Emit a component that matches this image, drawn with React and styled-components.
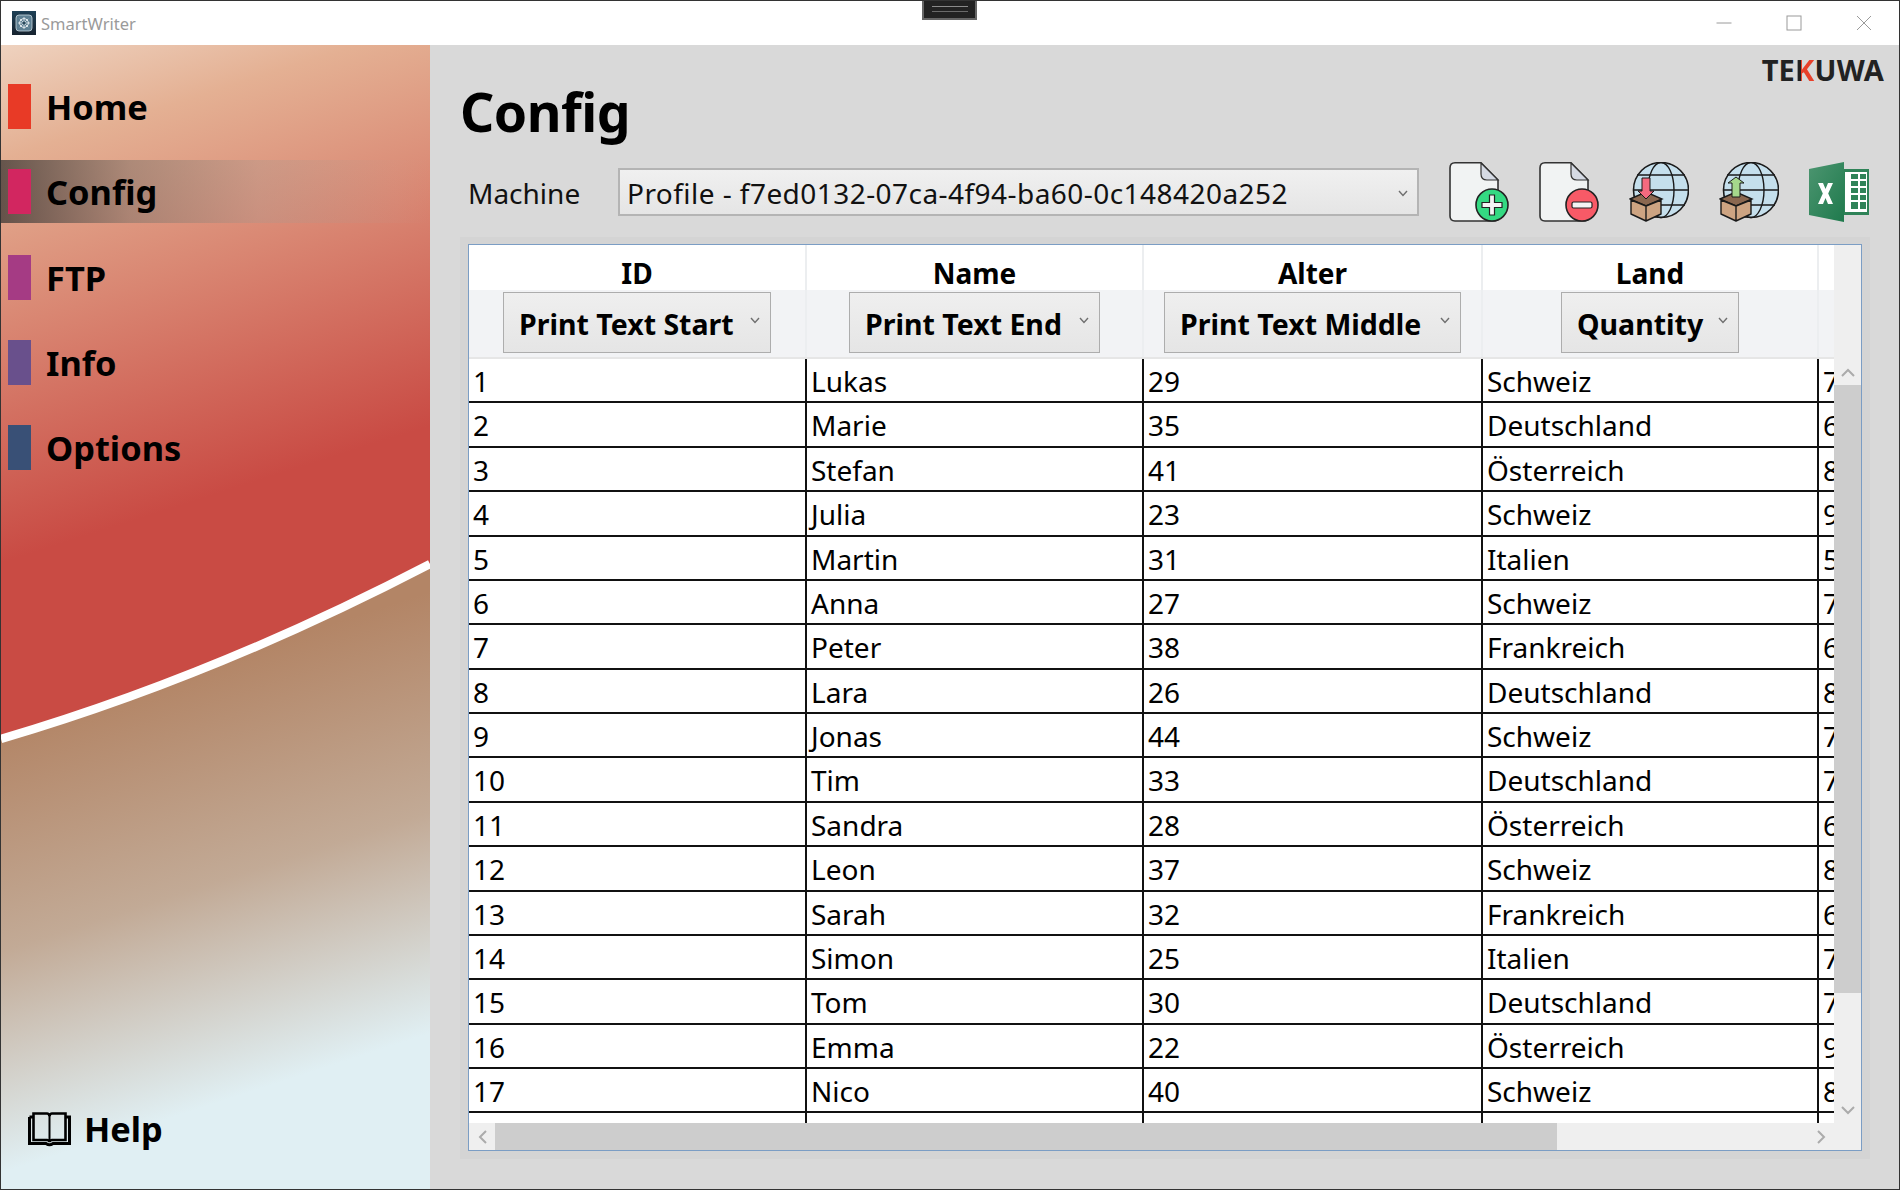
import React from 'react';
import styled, { createGlobalStyle } from 'styled-components';

const FONT = `"Noto Sans", "Open Sans", sans-serif`;

const navItems = [
  { label: 'Home', color: '#e83a26' },
  { label: 'Config', color: '#d22660', active: true },
  { label: 'FTP', color: '#a53b84' },
  { label: 'Info', color: '#69508c' },
  { label: 'Options', color: '#395076' },
];

const columns = [
  { title: 'ID', filter: 'Print Text Start', width: 268 },
  { title: 'Name', filter: 'Print Text End', width: 251 },
  { title: 'Alter', filter: 'Print Text Middle', width: 297 },
  { title: 'Land', filter: 'Quantity', width: 178 },
];

const people = [
  ['1', 'Lukas', '29', 'Schweiz', '7'],
  ['2', 'Marie', '35', 'Deutschland', '6'],
  ['3', 'Stefan', '41', 'Österreich', '8'],
  ['4', 'Julia', '23', 'Schweiz', '9'],
  ['5', 'Martin', '31', 'Italien', '5'],
  ['6', 'Anna', '27', 'Schweiz', '7'],
  ['7', 'Peter', '38', 'Frankreich', '6'],
  ['8', 'Lara', '26', 'Deutschland', '8'],
  ['9', 'Jonas', '44', 'Schweiz', '7'],
  ['10', 'Tim', '33', 'Deutschland', '7'],
  ['11', 'Sandra', '28', 'Österreich', '6'],
  ['12', 'Leon', '37', 'Schweiz', '8'],
  ['13', 'Sarah', '32', 'Frankreich', '6'],
  ['14', 'Simon', '25', 'Italien', '7'],
  ['15', 'Tom', '30', 'Deutschland', '7'],
  ['16', 'Emma', '22', 'Österreich', '9'],
  ['17', 'Nico', '40', 'Schweiz', '8'],
  ['', '', '', '', ''],
];

const GlobalStyle = createGlobalStyle`
  html, body { margin: 0; padding: 0; }
  body { font-family: ${FONT}; background: #d9d9d9; }
  * { box-sizing: border-box; }
`;

const Window = styled.div`
  width: 1900px;
  height: 1190px;
  display: flex;
  flex-direction: column;
  border: 1px solid #333;
  overflow: hidden;
  position: relative;
`;

const TitleBar = styled.div`
  height: 44px;
  flex: none;
  background: #fff;
  display: flex;
  align-items: center;
  padding: 0 27px 0 11px;
  gap: 5px;
`;

const AppName = styled.span`
  font-size: 16.5px;
  color: #9a9a9a;
  flex: 1;
`;

const WindowButtons = styled.div`
  display: flex;
  align-items: center;
  gap: 54px;
`;

const Handle = styled.div`
  position: absolute;
  left: 921px;
  top: -1px;
  width: 55px;
  height: 20px;
  background: #222;
  border: 2px solid #666;
  border-top: 0;
  display: flex;
  align-items: center;
  justify-content: center;

  &::after {
    content: '';
    width: 36px;
    height: 4px;
    border-top: 1px solid #8a8a8a;
    border-bottom: 1px solid #6a6a6a;
  }
`;

const Body = styled.div`
  flex: 1;
  min-height: 0;
  display: flex;
`;

const Sidebar = styled.aside`
  width: 429px;
  flex: none;
  position: relative;
  display: flex;
  flex-direction: column;
  padding-top: 28px;
`;

const SidebarArt = styled.svg`
  position: absolute;
  inset: 0;
  width: 100%;
  height: 100%;
`;

const NavItem = styled.div`
  position: relative;
  height: 85.33px;
  display: flex;
  align-items: center;
  flex: none;
  padding-bottom: 18px;
  gap: 15px;
  padding-left: 7px;
  font-size: 34.4px;
  font-weight: 700;
  color: #000;

  ${(p) => p.$active && `
    &::before {
      content: '';
      position: absolute;
      left: 0;
      right: 0;
      top: 2px;
      height: 63px;
      background: linear-gradient(90deg, rgba(70, 62, 58, 0.8) 0%, rgba(130, 115, 105, 0.55) 30%, rgba(170, 150, 140, 0.35) 60%, rgba(190, 160, 150, 0.08) 92%, rgba(190, 160, 150, 0) 100%);
    }
  `}
`;

const Marker = styled.span`
  position: relative;
  width: 23px;
  height: 45px;
  background: ${(p) => p.$color};
`;

const NavLabel = styled.span`
  position: relative;
  line-height: 45px;
`;

const HelpRow = styled.div`
  position: relative;
  margin-top: auto;
  margin-bottom: 37px;
  padding-left: 27px;
  display: flex;
  align-items: center;
  gap: 13px;
  font-size: 34.4px;
  font-weight: 700;
  line-height: 46px;
  color: #000;
`;

const Main = styled.main`
  flex: 1;
  min-width: 0;
  background: #d9d9d9;
  padding: 0 30px 30px 30px;
  position: relative;
  display: flex;
  flex-direction: column;
`;

const Logo = styled.div`
  position: absolute;
  top: 6px;
  right: 15px;
  font-size: 29px;
  line-height: 38px;
  font-weight: 700;
  letter-spacing: 0.2px;
  color: #222;
`;

const LogoK = styled.span`
  background: linear-gradient(90deg, #222 30%, #e8402a 30%);
  -webkit-background-clip: text;
  background-clip: text;
  color: transparent;
`;

const Title = styled.h1`
  margin: 0;
  height: 117px;
  padding-top: 29px;
  font-size: 53.5px;
  line-height: 76px;
  font-weight: 700;
  color: #000;
  letter-spacing: -0.5px;
`;

const Toolbar = styled.div`
  display: flex;
  align-items: center;
  height: 60px;
  flex: none;
`;

const MachineLabel = styled.label`
  width: 158px;
  padding: 2px 0 0 8px;
  font-size: 28px;
  color: #111;
`;

const Combo = styled.div`
  width: 801px;
  height: 48px;
  margin-right: 30px;
  display: flex;
  align-items: center;
  justify-content: space-between;
  padding: 2px 9px 0 7px;
  font-size: 28px;
  letter-spacing: 0.45px;
  color: #111;
  border: 2px solid #b4b4b4;
  background: linear-gradient(#f0f0f0, #e5e5e5);
  white-space: nowrap;
`;

const IconRow = styled.div`
  display: flex;
  gap: 30px;
`;

const Panel = styled.div`
  margin-top: 15px;
  height: 922px;
  margin-right: -1px;
  padding: 7px 8px 8px 8px;
  background: #d4d4d4;
  flex: none;
`;

const Grid = styled.div`
  height: 100%;
  border: 1px solid #7b9dc4;
  background: #fff;
  display: grid;
  grid-template-columns: 1fr 27px;
  grid-template-rows: 1fr 27px;
  overflow: hidden;
`;

const GridContent = styled.div`
  overflow: hidden;
  min-width: 0;
  min-height: 0;
`;

const HeaderRow = styled.div`
  display: flex;
  height: 114px;
  background: linear-gradient(#fff 0, #fff 45px, #f2f3f5 45px, #f2f3f5 100%);
  border-bottom: 2px solid #e6e6e6;
`;

const HeaderCell = styled.div`
  flex: none;
  width: ${(p) => p.$width}px;
  display: flex;
  flex-direction: column;
  align-items: center;
  border-right: 2px solid #eceef0;
`;

const HeaderTitle = styled.div`
  height: 46px;
  font-size: 28px;
  font-weight: 700;
  line-height: 56px;
  color: #000;
`;

const FilterSelect = styled.div`
  width: ${(p) => p.$width}px;
  height: 61px;
  margin-top: 1px;
  display: flex;
  align-items: center;
  justify-content: space-between;
  padding: 2px 10px 0 15px;
  font-size: 28.5px;
  font-weight: 700;
  white-space: nowrap;
  color: #000;
  border: 1px solid #adadad;
  background: linear-gradient(#efefef, #e5e5e5);
`;

const Row = styled.div`
  display: flex;
  height: 44.375px;
  border-bottom: 2px solid #111;
`;

const Cell = styled.div`
  flex: none;
  width: ${(p) => p.$width}px;
  height: 44.375px;
  padding-left: 4px;
  font-size: 28px;
  line-height: 45px;
  color: #000;
  border-right: 2px solid #111;
  overflow: hidden;
  white-space: nowrap;
`;

const VScroll = styled.div`
  background: #efefef;
  position: relative;
`;

const HScroll = styled.div`
  background: #efefef;
  position: relative;
  display: flex;
  align-items: center;
`;

const ScrollCorner = styled.div`
  background: #efefef;
`;

const ThumbV = styled.div`
  position: absolute;
  left: 0;
  right: 0;
  top: 140px;
  height: 608px;
  background: #cdcdcd;
`;

const ThumbH = styled.div`
  height: 100%;
  width: 1062px;
  margin-left: 26px;
  background: #cdcdcd;
`;

const ArrowV = styled.svg`
  position: absolute;
  left: 7px;
  ${(p) => (p.$bottom ? 'bottom: 8px;' : 'top: 123px;')}
`;

const ArrowH = styled.svg`
  position: absolute;
  ${(p) => (p.$right ? 'right: 8px;' : 'left: 9px;')}
`;

const ChevronIcon = styled.svg`
  flex: none;
  margin-bottom: ${(p) => p.$lift}px;
`;

const FileIcon = ({ color, plus }) => (
  <svg width="60" height="60" viewBox="0 0 60 60">
    <path d="M6 0.8 H32 L49 18 V55 Q49 59 45 59 H6 Q1 59 1 54 V6 Q1 0.8 6 0.8 Z" fill="#f1f3f3" stroke="#333" strokeWidth="1.6" />
    <path d="M32 1 L49 18 H38 Q32 18 32 12 Z" fill="#d5dae4" stroke="#333" strokeWidth="1.2" />
    <circle cx="43" cy="43" r="16" fill={color} stroke="#222" strokeWidth="1.6" />
    {plus ? (
      <path d="M40.5 33 H45.5 V40.5 H53 V45.5 H45.5 V53 H40.5 V45.5 H33 V40.5 H40.5 Z" fill="#f4f4f4" stroke="#222" strokeWidth="1.2" />
    ) : (
      <rect x="33" y="40" width="20" height="6" rx="1.5" fill="#f4f4f4" stroke="#222" strokeWidth="1.2" />
    )}
  </svg>
);

const GlobeIcon = ({ up }) => (
  <svg width="60" height="60" viewBox="0 0 60 60">
    <circle cx="32" cy="28" r="27.5" fill="#c5dfec" stroke="#1a1a1a" strokeWidth="1.6" />
    <ellipse cx="32" cy="28" rx="13" ry="27.5" fill="none" stroke="#1a1a1a" strokeWidth="1.4" />
    <path d="M8 13 H56 M5 28 H59 M8 43 H56" stroke="#1a1a1a" strokeWidth="1.4" fill="none" />
    <path d="M1 37 L17 30 L33 37 L17 44 Z" fill="#8b6850" stroke="#1a1a1a" strokeWidth="1.4" />
    {up ? (
      <path d="M13 35 V21 H9 L17 15 L25 21 H21 V35 Z" fill="#a5d88c" stroke="#1a1a1a" strokeWidth="1" />
    ) : (
      <path d="M13 16 H21 V29 H25 L17 37 L9 29 H13 Z" fill="#f56a7f" stroke="#1a1a1a" strokeWidth="1" />
    )}
    <path d="M2 38 V52 L17 59 V44 Z M32 38 V52 L17 59 V44 Z" fill="#cda482" stroke="#1a1a1a" strokeWidth="1.4" strokeLinejoin="round" />
  </svg>
);

const ExcelIcon = () => (
  <svg width="60" height="60" viewBox="0 0 60 60">
    <defs>
      <linearGradient id="excelFill" x1="0" y1="0" x2="1" y2="1">
        <stop offset="0" stopColor="#4c9570" />
        <stop offset="1" stopColor="#1f7a4d" />
      </linearGradient>
    </defs>
    <rect x="35" y="7" width="25" height="46" fill="#2f8358" />
    <path d="M36 10 H58 V50 H36 Z" fill="#fff" />
    <path d="M42 12 H49 V17 H42 Z M51 12 H57 V17 H51 Z M42 19 H49 V24 H42 Z M51 19 H57 V24 H51 Z M42 26 H49 V31 H42 Z M51 26 H57 V31 H51 Z M42 33 H49 V38 H42 Z M51 33 H57 V38 H51 Z M42 40 H49 V47 H42 Z M51 40 H57 V47 H51 Z" fill="#2f8358" />
    <path d="M0 7 L35 0 V60 L0 53 Z" fill="url(#excelFill)" />
    <path d="M9 21 H14 L16.5 27 L19 21 H24 L19.2 31.5 L24 42 H19 L16.5 36 L14 42 H9 L13.8 31.5 Z" fill="#fff" />
  </svg>
);

const AppIcon = () => (
  <svg width="24" height="24" viewBox="0 0 24 24">
    <defs>
      <linearGradient id="appFill" x1="0" y1="0" x2="0" y2="1">
        <stop offset="0" stopColor="#1d3f55" />
        <stop offset="1" stopColor="#17232f" />
      </linearGradient>
    </defs>
    <rect width="24" height="24" fill="url(#appFill)" />
    <rect x="4" y="4" width="16" height="16" rx="3" fill="#5d7f92" stroke="#c9d8df" strokeWidth="0.8" />
    <circle cx="12" cy="12" r="4.4" fill="none" stroke="#e8eef1" strokeWidth="1" />
    <path d="M12 6 V18 M6 12 H18 M7.8 7.8 L16.2 16.2 M16.2 7.8 L7.8 16.2" stroke="#e8eef1" strokeWidth="0.8" />
    <circle cx="12" cy="12" r="1.6" fill="#29485a" />
  </svg>
);

const BookIcon = () => (
  <svg width="43" height="36" viewBox="0 0 43 36">
    <path d="M1.5 6 H5 M38 6 H41.5 V32.5 H25 Q21.5 35 18 32.5 H1.5 V6" fill="none" stroke="#000" strokeWidth="3" />
    <path d="M5.5 2.5 H19 Q21 2.5 21.5 5 Q22 2.5 24 2.5 H37.5 V29 H24 Q22 29 21.5 31 Q21 29 19 29 H5.5 Z" fill="none" stroke="#000" strokeWidth="2.6" />
    <path d="M21.5 5 V31" stroke="#000" strokeWidth="2" />
  </svg>
);

const Chevron = ({ lift = 0 }) => (
  <ChevronIcon $lift={lift} width="10" height="7" viewBox="0 0 10 7">
    <path d="M1 1 L5 5.5 L9 1" fill="none" stroke="#6e6e6e" strokeWidth="1.4" />
  </ChevronIcon>
);

const App = () => {
  const colWidths = [338, 337, 339, 336, 60];
  return (
    <>
      <GlobalStyle />
      <Window>
        <Handle />
        <TitleBar>
          <AppIcon />
          <AppName>SmartWriter</AppName>
          <WindowButtons>
            <svg width="16" height="16" viewBox="0 0 16 16">
              <path d="M0.5 8 H15.5" stroke="#9a9a9a" />
            </svg>
            <svg width="16" height="16" viewBox="0 0 16 16">
              <rect x="1" y="1" width="14" height="14" fill="none" stroke="#9a9a9a" />
            </svg>
            <svg width="16" height="16" viewBox="0 0 16 16">
              <path d="M1 1 L15 15 M15 1 L1 15" stroke="#9a9a9a" />
            </svg>
          </WindowButtons>
        </TitleBar>
        <Body>
          <Sidebar>
            <SidebarArt viewBox="0 0 429 1144" preserveAspectRatio="none">
              <defs>
                <linearGradient id="topFill" gradientUnits="userSpaceOnUse" x1="0" y1="0" x2="150" y2="470">
                  <stop offset="0" stopColor="#eed2bf" />
                  <stop offset="0.22" stopColor="#e4b093" />
                  <stop offset="0.55" stopColor="#d98672" />
                  <stop offset="1" stopColor="#c94b44" />
                </linearGradient>
                <linearGradient id="lowFill" gradientUnits="userSpaceOnUse" x1="110" y1="650" x2="240" y2="1050">
                  <stop offset="0" stopColor="#b38566" />
                  <stop offset="0.5" stopColor="#c2aa96" />
                  <stop offset="1" stopColor="#e0eff3" />
                </linearGradient>
              </defs>
              <rect width="429" height="1144" fill="url(#lowFill)" />
              <path d="M0 694 Q214 631 429 519 V0 H0 Z" fill="url(#topFill)" />
              <path d="M0 694 Q214 631 429 519" fill="none" stroke="#fff" strokeWidth="8.5" />
            </SidebarArt>
            {navItems.map((item) => (
              <NavItem key={item.label} $active={item.active}>
                <Marker $color={item.color} />
                <NavLabel>{item.label}</NavLabel>
              </NavItem>
            ))}
            <HelpRow>
              <BookIcon />
              Help
            </HelpRow>
          </Sidebar>
          <Main>
            <Logo>TE<LogoK>K</LogoK>UWA</Logo>
            <Title>Config</Title>
            <Toolbar>
              <MachineLabel>Machine</MachineLabel>
              <Combo>
                Profile - f7ed0132-07ca-4f94-ba60-0c148420a252
                <Chevron />
              </Combo>
              <IconRow>
                <FileIcon color="#34d982" plus />
                <FileIcon color="#f85a67" />
                <GlobeIcon />
                <GlobeIcon up />
                <ExcelIcon />
              </IconRow>
            </Toolbar>
            <Panel>
              <Grid>
                <GridContent>
                  <HeaderRow>
                    {columns.map((col, i) => (
                      <HeaderCell key={col.title} $width={colWidths[i]}>
                        <HeaderTitle>{col.title}</HeaderTitle>
                        <FilterSelect $width={col.width}>
                          {col.filter}
                          <Chevron lift={6} />
                        </FilterSelect>
                      </HeaderCell>
                    ))}
                  </HeaderRow>
                  {people.map((row, r) => (
                    <Row key={r}>
                      {row.map((value, i) => (
                        <Cell key={i} $width={colWidths[i]}>{value}</Cell>
                      ))}
                    </Row>
                  ))}
                </GridContent>
                <VScroll>
                  <ThumbV />
                  <ArrowV width="14" height="9" viewBox="0 0 14 9">
                    <path d="M1 8 L7 2 L13 8" fill="none" stroke="#ababab" strokeWidth="2" />
                  </ArrowV>
                  <ArrowV $bottom width="14" height="9" viewBox="0 0 14 9">
                    <path d="M1 1 L7 7 L13 1" fill="none" stroke="#ababab" strokeWidth="2" />
                  </ArrowV>
                </VScroll>
                <HScroll>
                  <ArrowH width="9" height="14" viewBox="0 0 9 14">
                    <path d="M8 1 L2 7 L8 13" fill="none" stroke="#ababab" strokeWidth="2" />
                  </ArrowH>
                  <ThumbH />
                  <ArrowH $right width="9" height="14" viewBox="0 0 9 14">
                    <path d="M1 1 L7 7 L1 13" fill="none" stroke="#ababab" strokeWidth="2" />
                  </ArrowH>
                </HScroll>
                <ScrollCorner />
              </Grid>
            </Panel>
          </Main>
        </Body>
      </Window>
    </>
  );
};

export default App;
